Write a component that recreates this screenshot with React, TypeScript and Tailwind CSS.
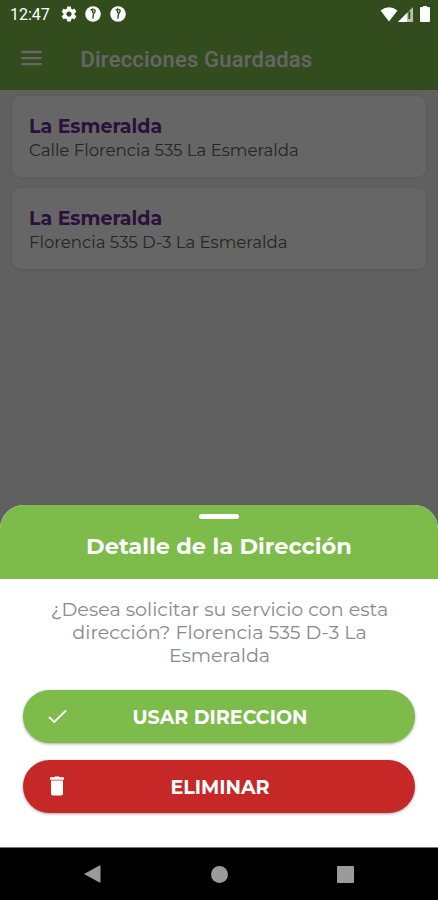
import React from "react";

const addresses = [
  { name: "La Esmeralda", detail: "Calle Florencia 535 La Esmeralda" },
  { name: "La Esmeralda", detail: "Florencia 535 D-3 La Esmeralda" },
];

function GearIcon() {
  return (
    <svg width="18" height="18" viewBox="0 0 24 24" fill="white">
      <path d="M19.43 12.98c.04-.32.07-.64.07-.98s-.03-.66-.07-.98l2.11-1.65c.19-.15.24-.42.12-.64l-2-3.46c-.12-.22-.39-.3-.61-.22l-2.49 1c-.52-.4-1.08-.73-1.69-.98l-.38-2.65A.488.488 0 0014 2h-4c-.25 0-.46.18-.49.42l-.38 2.65c-.61.25-1.17.59-1.69.98l-2.49-1c-.23-.09-.49 0-.61.22l-2 3.46c-.13.22-.07.49.12.64l2.11 1.65c-.04.32-.07.65-.07.98s.03.66.07.98l-2.11 1.65c-.19.15-.24.42-.12.64l2 3.46c.12.22.39.3.61.22l2.49-1c.52.4 1.08.73 1.69.98l.38 2.65c.03.24.24.42.49.42h4c.25 0 .46-.18.49-.42l.38-2.65c.61-.25 1.17-.59 1.69-.98l2.49 1c.23.09.49 0 .61-.22l2-3.46c.12-.22.07-.49-.12-.64l-2.11-1.65zM12 15.5c-1.93 0-3.5-1.57-3.5-3.5s1.57-3.5 3.5-3.5 3.5 1.57 3.5 3.5-1.57 3.5-3.5 3.5z" />
    </svg>
  );
}

function NoticeIcon() {
  return (
    <svg width="16" height="16" viewBox="0 0 16 16">
      <circle cx="8" cy="8" r="7.8" fill="white" />
      <path d="M5.6 4.2L7.6 3.2V7.2M8.6 3.4C10.4 3.6 10.6 5.4 9.2 6.8L8.4 8.4L7.8 12.6" stroke="#324b1e" strokeWidth="1.4" fill="none" />
    </svg>
  );
}

function StatusBar() {
  return (
    <div className="flex h-7 items-center pl-[10px] pr-[8px] font-['Roboto',sans-serif] text-white">
      <span className="w-[50px] pt-[2px] text-[16px] leading-[26px]">12:47</span>
      <GearIcon />
      <span className="ml-[7px]"><NoticeIcon /></span>
      <span className="ml-[9px]"><NoticeIcon /></span>
      <span className="ml-auto flex items-center">
        <svg width="18" height="15" viewBox="0 0 18 15"><path d="M0.5 3.5Q9-3 17.5 3.5L9 14.5Z" fill="white" /></svg>
        <svg width="15" height="15" viewBox="0 0 15 15">
          <path d="M0 15L15 0V15Z" fill="#b5c0ad" />
          <path d="M0 15L9 6V15Z" fill="white" />
          <path d="M11.3 4.5V12" stroke="#324b1e" strokeWidth="1.8" />
        </svg>
        <svg className="ml-[7px]" width="10" height="16" viewBox="0 0 10 16"><path d="M3 0h4v1h2q1 0 1 1v13q0 1-1 1H1q-1 0-1-1V2q0-1 1-1h2z" fill="white" /></svg>
      </span>
    </div>
  );
}

export default function App() {
  return (
    <div className="relative h-[900px] w-[438px] overflow-hidden bg-[#f0f0f0] font-['Roboto',sans-serif]">
      <header className="h-[90px] bg-[#7dbd4b] pt-7">
        <div className="flex h-[62px] items-center pl-[21px] text-white">
          <svg className="mb-[2px]" width="21" height="16" viewBox="0 0 21 16">
            <path d="M1.2 2H19.8M1.2 8.2H19.8M1.2 14.2H19.8" stroke="white" strokeWidth="2.3" strokeLinecap="round" />
          </svg>
          <h1 className="ml-[38.5px] mt-[2px] whitespace-nowrap text-[22px] font-medium leading-7 tracking-[0.2px]">Direcciones Guardadas</h1>
        </div>
      </header>

      <main className="flex flex-col gap-[11px] px-[12px] pt-[6px] font-['Montserrat','Inter',sans-serif]">
        {addresses.map((a) => (
          <article key={a.detail} className="h-[81px] rounded-[9px] bg-white px-[17px] pt-[19px] shadow-[0_1px_4px_rgba(0,0,0,0.08)]">
            <h2 className="whitespace-nowrap text-[19px] font-bold leading-[24px] text-[#6a2c96]">{a.name}</h2>
            <p className="whitespace-nowrap text-[16.6px] leading-[22px] text-[#5c5c5c]">{a.detail}</p>
          </article>
        ))}
      </main>

      <div className="absolute inset-0 z-10 flex flex-col bg-black/60 font-['Montserrat','Inter',sans-serif]">
        <StatusBar />
        <section className="mt-auto h-[342px] overflow-hidden rounded-t-[24px] bg-white">
          <div className="flex h-[74px] flex-col items-center bg-[#7dbb4b] pt-[9px]">
            <span className="h-[5px] w-[40px] rounded-full bg-white" />
            <h2 className="mt-[13px] whitespace-nowrap text-[22.5px] font-bold leading-[28px] text-white">Detalle de la Dirección</h2>
          </div>
          <p className="mt-[18.5px] whitespace-nowrap pl-[1px] text-center text-[19.1px] leading-[23.3px] text-[#8a8a8a]">
            <span className="block">¿Desea solicitar su servicio con esta</span>
            <span className="block">dirección? Florencia 535 D-3 La</span>
            <span className="block">Esmeralda</span>
          </p>
          <div className="mt-[22.5px] flex flex-col gap-[17px] px-[23px] text-[19.1px] font-bold text-white">
            <button className="grid h-[53px] grid-cols-[69px_1fr_69px] items-center rounded-full bg-[#7dbb4b] shadow-[0_1px_3px_rgba(0,0,0,0.35)]">
              <svg className="ml-[25px]" width="19" height="15" viewBox="0 0 19 15"><path d="M1 8L6.3 13L18 1.5" fill="none" stroke="white" strokeWidth="1.9" /></svg>
              <span className="whitespace-nowrap pl-[2px] pt-[4px]">USAR DIRECCION</span>
            </button>
            <button className="grid h-[53px] grid-cols-[69px_1fr_69px] items-center rounded-full bg-[#c62828] shadow-[0_1px_3px_rgba(0,0,0,0.35)]">
              <svg className="ml-[26px]" width="16" height="20" viewBox="0 0 16 20"><path d="M1 1.3h4L6 .5h4l1 .8h4v2.4H1zM2 4.4h12v13.1q0 2-2 2H4q-2 0-2-2z" fill="white" /></svg>
              <span className="whitespace-nowrap pl-[2px] pt-[4px]">ELIMINAR</span>
            </button>
          </div>
        </section>
        <nav className="flex h-[53px] items-center border-t border-[#777] bg-black pl-[84px]">
          <svg width="17" height="18" viewBox="0 0 17 18"><path d="M0 9L15.5 .5Q16.5 0 16.5 1V17Q16.5 18 15.5 17.5Z" fill="#9b9b9b" /></svg>
          <span className="ml-[110px] size-[17px] rounded-full bg-[#9b9b9b]" />
          <span className="ml-[109px] size-[17px] rounded-[1px] bg-[#9b9b9b]" />
        </nav>
      </div>
    </div>
  );
}
